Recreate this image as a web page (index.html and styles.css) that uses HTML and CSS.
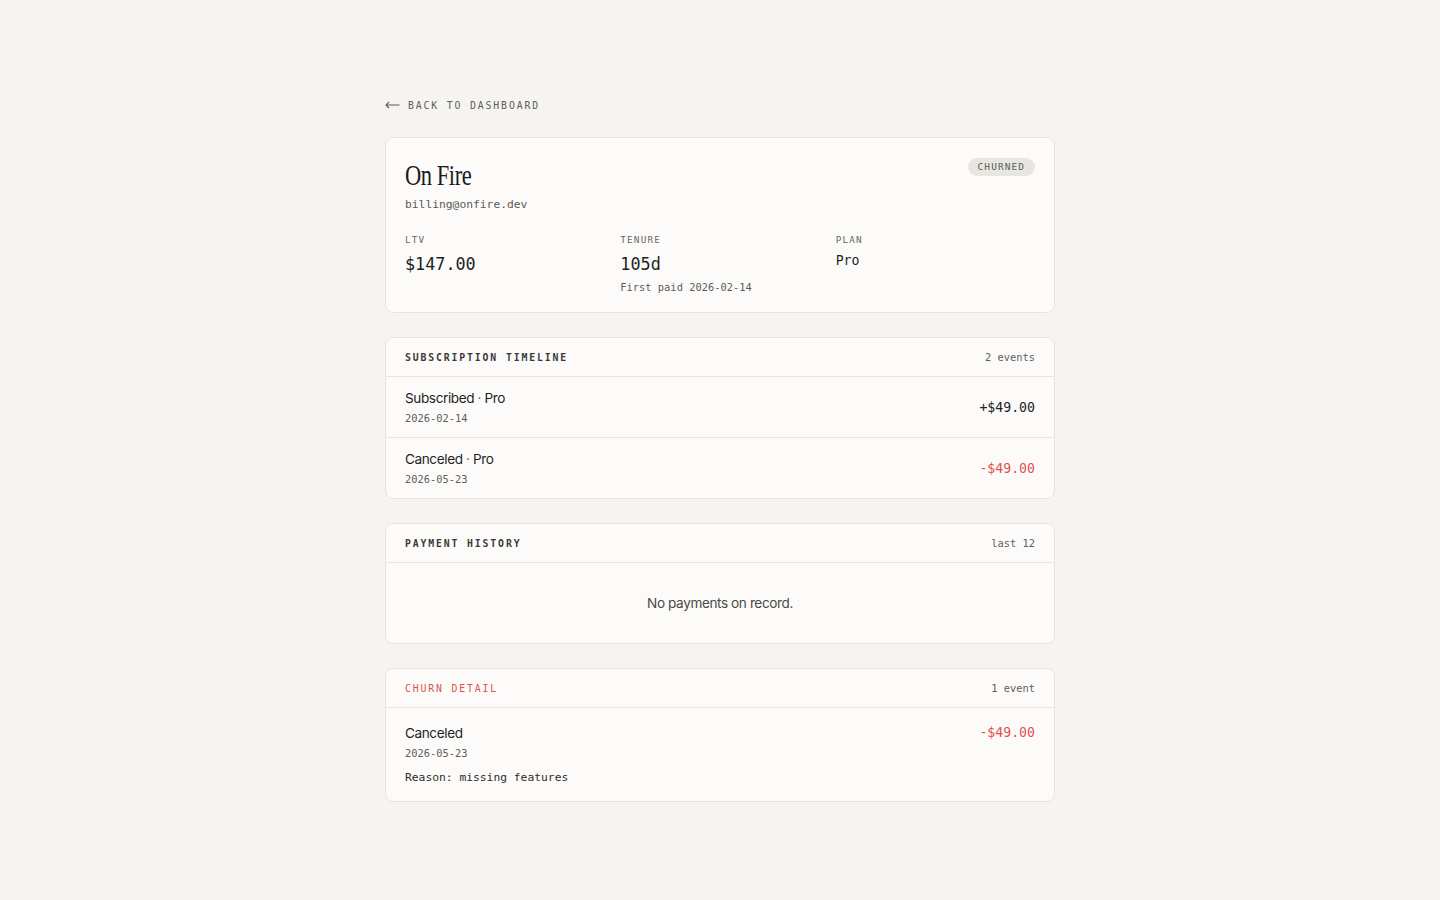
FILE: index.html
```html
<!DOCTYPE html>
<html lang="en">
<head>
<meta charset="utf-8">
<title>On Fire — Customer</title>
<link rel="stylesheet" href="styles.css">
</head>
<body>
<main class="page">
  <a class="back" href="#">
    <svg class="back-icon" width="15" height="8" viewBox="0 0 15 8" fill="none" stroke="currentColor" stroke-width="1.1"><path d="M14.5 4H1M4 1L1 4l3 3"/></svg>
    <span>BACK TO DASHBOARD</span>
  </a>

  <section class="card profile">
    <div class="profile-top">
      <div>
        <h1 class="name">On Fire</h1>
        <div class="email">billing@onfire.dev</div>
      </div>
      <span class="badge">CHURNED</span>
    </div>
    <div class="stats">
      <div class="stat">
        <div class="label">LTV</div>
        <div class="value">$147.00</div>
      </div>
      <div class="stat">
        <div class="label">TENURE</div>
        <div class="value">105d</div>
        <div class="sub">First paid 2026-02-14</div>
      </div>
      <div class="stat">
        <div class="label">PLAN</div>
        <div class="value small">Pro</div>
      </div>
    </div>
  </section>

  <section class="card">
    <header class="card-head">
      <h2 class="head-title">SUBSCRIPTION TIMELINE</h2>
      <span class="head-meta">2 events</span>
    </header>
    <div class="row">
      <div>
        <div class="row-title">Subscribed <span class="dot">·</span> Pro</div>
        <div class="row-date">2026-02-14</div>
      </div>
      <div class="amount">+$49.00</div>
    </div>
    <div class="row">
      <div>
        <div class="row-title">Canceled <span class="dot">·</span> Pro</div>
        <div class="row-date">2026-05-23</div>
      </div>
      <div class="amount neg">-$49.00</div>
    </div>
  </section>

  <section class="card">
    <header class="card-head">
      <h2 class="head-title">PAYMENT HISTORY</h2>
      <span class="head-meta">last 12</span>
    </header>
    <div class="empty">No payments on record.</div>
  </section>

  <section class="card">
    <header class="card-head">
      <h2 class="head-title red">CHURN DETAIL</h2>
      <span class="head-meta">1 event</span>
    </header>
    <div class="churn">
      <div class="churn-top">
        <div>
          <div class="row-title">Canceled</div>
          <div class="row-date">2026-05-23</div>
        </div>
        <div class="amount neg">-$49.00</div>
      </div>
      <div class="reason">Reason: missing features</div>
    </div>
  </section>
</main>
</body>
</html>
```

FILE: styles.css
```css
* { box-sizing: border-box; }
html, body { margin: 0; padding: 0; }
body {
  background: #f6f4f0;
  color: #1f1f1f;
  font-family: Inter, "Noto Sans", sans-serif;
  -webkit-font-smoothing: antialiased;
}
.page {
  width: 670px;
  margin: 0 auto;
  padding-top: 98px;
  display: flex;
  flex-direction: column;
  gap: 24px;
}
.back {
  display: flex;
  align-items: center;
  gap: 8px;
  color: #5e5d5a;
  text-decoration: none;
  font-family: "DejaVu Sans Mono", "Liberation Mono", monospace;
  font-size: 9.8px;
  letter-spacing: 0.19em;
  height: 14px;
  margin-bottom: 1px;
}
.back-icon { display: block; }
.card {
  background: #fcfbf9;
  border: 1px solid #e8e5df;
  border-radius: 8px;
  overflow: hidden;
}
.profile { padding: 19px 19px 19px; }
.profile-top {
  display: flex;
  justify-content: space-between;
  align-items: flex-start;
}
.name {
  margin: 0;
  display: inline-block;
  font-family: "Liberation Serif", serif;
  font-weight: 400;
  font-size: 30px;
  line-height: 36px;
  letter-spacing: -0.02em;
  color: #1c1c1c;
  transform: scaleX(0.75);
  transform-origin: left center;
}
.email {
  margin-top: 5px;
  font-family: "DejaVu Sans Mono", "Liberation Mono", monospace;
  font-size: 11.3px;
  color: #5b5a57;
}
.badge {
  background: #e8e6e1;
  border-radius: 999px;
  padding: 3px 10px;
  font-family: "DejaVu Sans Mono", "Liberation Mono", monospace;
  font-size: 9.4px;
  letter-spacing: 0.12em;
  color: #5c5b58;
  line-height: 12px;
  margin-top: 1px;
}
.stats {
  display: grid;
  grid-template-columns: repeat(3, 1fr);
  gap: 16px;
  margin-top: 23px;
}
.label {
  font-family: "DejaVu Sans Mono", "Liberation Mono", monospace;
  font-size: 9.4px;
  letter-spacing: 0.12em;
  color: #6b6a66;
  line-height: 12px;
}
.value {
  margin-top: 8px;
  font-family: "DejaVu Sans Mono", "Liberation Mono", monospace;
  font-size: 16.8px;
  color: #1f1f1f;
  line-height: 20px;
}
.value.small { font-size: 13.2px; line-height: 16px; margin-top: 7px; }
.sub {
  margin-top: 7px;
  font-family: "DejaVu Sans Mono", "Liberation Mono", monospace;
  font-size: 10.4px;
  color: #5e5d5a;
}
.card-head {
  display: flex;
  justify-content: space-between;
  align-items: center;
  height: 39px;
  padding: 0 19px;
  border-bottom: 1px solid #e8e5df;
}
.head-title {
  margin: 0;
  font-family: "DejaVu Sans Mono", "Liberation Mono", monospace;
  font-size: 9.8px;
  font-weight: 700;
  letter-spacing: 0.19em;
  color: #3a3937;
}
.head-title.red { color: #e0524f; font-weight: 400; }
.head-meta {
  font-family: "DejaVu Sans Mono", "Liberation Mono", monospace;
  font-size: 10.4px;
  color: #5f5e5b;
}
.row {
  display: flex;
  justify-content: space-between;
  align-items: center;
  height: 61px;
  padding: 0 19px;
  border-bottom: 1px solid #e8e5df;
}
.row:last-child { border-bottom: 0; height: 60px; }
.row-title {
  font-size: 13.6px;
  letter-spacing: -0.03em;
  color: #1f1f1f;
  line-height: 18px;
}
.dot { color: #5d5c59; }
.row-date {
  margin-top: 5px;
  font-family: "DejaVu Sans Mono", "Liberation Mono", monospace;
  font-size: 10.4px;
  line-height: 13px;
  color: #5e5d5a;
}
.amount {
  font-family: "DejaVu Sans Mono", "Liberation Mono", monospace;
  font-size: 13.2px;
  color: #222;
}
.amount.neg { color: #e0524f; }
.empty {
  height: 80px;
  display: flex;
  align-items: center;
  justify-content: center;
  font-size: 13.6px;
  letter-spacing: -0.03em;
  color: #4a4947;
}
.churn { padding: 16px 19px 17px; }
.churn-top {
  display: flex;
  justify-content: space-between;
  align-items: flex-start;
}
.churn-top .amount { margin-top: 1px; }
.reason {
  margin-top: 11px;
  font-family: "DejaVu Sans Mono", "Liberation Mono", monospace;
  font-size: 11.3px;
  color: #2e2d2b;
}
```
